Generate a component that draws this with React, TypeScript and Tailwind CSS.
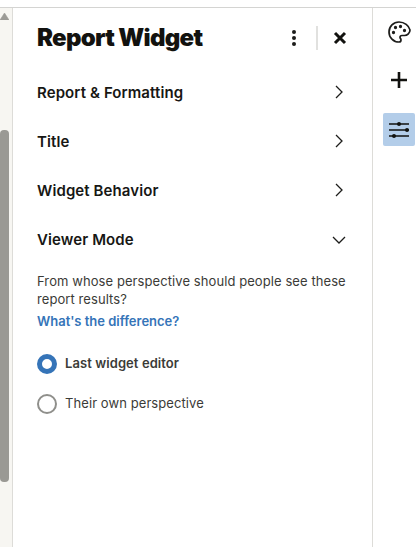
import React from "react";

function Chevron({ down }: { down?: boolean }) {
  return (
    <svg className={down ? "mb-[2px]" : "mb-[3px]"} width="14" height="14" viewBox="0 0 14 14" fill="none" stroke="#1d1d1b" strokeWidth="1.3">
      {down ? <path d="M1 4 L7 10 L13 4" /> : <path d="M4 1 L10 7 L4 13" />}
    </svg>
  );
}

function Row({ label, down }: { label: string; down?: boolean }) {
  return (
    <div className="h-[49px] flex items-center justify-between pr-[26px]">
      <span className="text-[15px] font-semibold tracking-[0.1px] text-[#171714]">{label}</span>
      <Chevron down={down} />
    </div>
  );
}

export default function App() {
  return (
    <div className="w-[416px] h-[547px] bg-white overflow-hidden flex flex-col font-['Inter',sans-serif]">
      <div className="h-[7px] shrink-0" />
      <div className="flex-1 flex border-t border-t-[#d4d4d2] min-h-0">
        <div className="w-[13px] shrink-0 bg-[#f7f6f2] border-r border-r-[#dddcd8] flex flex-col">
          <div className="w-[9px] pt-[5px] flex justify-center">
            <svg width="9" height="7" viewBox="0 0 9 7"><path d="M4.5 0 L9 7 H0 Z" fill="#9c9b96" stroke="#9c9b96" strokeWidth="0.6" /></svg>
          </div>
          <div className="w-[9px] h-[352px] mt-[110px] bg-[#9a9994] rounded-[4px]" />
        </div>
        <div className="w-[360px] shrink-0 border-r border-r-[#dddcd8] pl-[24px] flex flex-col">
          <div className="h-[61px] pb-[1px] flex items-center justify-between pr-[25px] shrink-0">
            <span className="text-[24px] font-black tracking-[-0.7px] text-[#12120f]">Report Widget</span>
            <div className="flex items-center">
              <svg width="6" height="18" viewBox="0 0 6 18" fill="#1d1d1b">
                <circle cx="3" cy="3" r="2" />
                <circle cx="3" cy="9" r="2" />
                <circle cx="3" cy="15" r="2" />
              </svg>
              <div className="w-[2px] h-[24px] bg-[#e1e1df] ml-[19px] mr-[15px]" />
              <svg width="14" height="14" viewBox="0 0 14 14" stroke="#12120f" strokeWidth="3" fill="none">
                <path d="M2 2 L12 12 M12 2 L2 12" />
              </svg>
            </div>
          </div>
          <Row label="Report & Formatting" />
          <Row label="Title" />
          <Row label="Widget Behavior" />
          <Row label="Viewer Mode" down />
          <p className="mt-[7px] pr-[20px] text-[13px] tracking-[0.08px] leading-[18px] text-[#3b3b37]">
            From whose perspective should people see these report results?
          </p>
          <a className="mt-[4px] text-[13px] tracking-[-0.02px] leading-[18px] font-semibold text-[#3574b8]">What's the difference?</a>
          <div className="mt-[24px] flex items-center gap-[8px] h-[20px]">
            <div className="w-[20px] h-[20px] rounded-full border-[5.5px] border-[#3574b8] bg-white" />
            <span className="text-[13px] tracking-[0.08px] font-semibold text-[#3b3b37]">Last widget editor</span>
          </div>
          <div className="mt-[20px] flex items-center gap-[8px] h-[20px]">
            <div className="w-[20px] h-[20px] rounded-full border-2 border-[#8f8f8b] bg-white" />
            <span className="text-[13px] tracking-[0.08px] text-[#3b3b37]">Their own perspective</span>
          </div>
        </div>
        <div className="flex-1 flex flex-col items-center pl-[10px] pr-[1px] pt-[12px]">
          <svg width="24" height="24" viewBox="0 0 24 24" fill="none" stroke="#1d1d1b" strokeWidth="1.7" strokeLinecap="round" strokeLinejoin="round">
            <path d="M12 2C6.5 2 2 6.5 2 12s4.5 10 10 10c1.1 0 2-.9 2-2 0-.5-.2-1-.5-1.3-.3-.4-.5-.8-.5-1.2 0-1.1.9-2 2-2h2.4c3 0 5.6-2.500 5.600-5.600C22 5.600 17.500 2 12 2Z" />
            <circle cx="13.500" cy="6.500" r=".8" fill="#1d1d1b" />
            <circle cx="17.500" cy="10.500" r=".8" fill="#1d1d1b" />
            <circle cx="8.500" cy="7.500" r=".8" fill="#1d1d1b" />
            <circle cx="6.500" cy="12.500" r=".8" fill="#1d1d1b" />
          </svg>
          <svg className="mt-[28px]" width="16" height="16" viewBox="0 0 16 16" stroke="#12120f" strokeWidth="2.600" fill="none">
            <path d="M8 0 V16 M0 8 H16" />
          </svg>
          <div className="mt-[25px] w-[32px] h-[33px] rounded-[2px] bg-[#b3cde9] flex items-center justify-center">
            <svg width="20" height="18" viewBox="0 0 20 18" stroke="#12120f" strokeWidth="1.300" fill="#12120f">
              <path d="M0 3 H20 M0 9 H20 M0 15 H20" fill="none" />
              <circle cx="10" cy="3" r="2" stroke="none" />
              <circle cx="18" cy="9" r="2" stroke="none" />
              <circle cx="5" cy="15" r="2" stroke="none" />
            </svg>
          </div>
        </div>
      </div>
    </div>
  );
}
